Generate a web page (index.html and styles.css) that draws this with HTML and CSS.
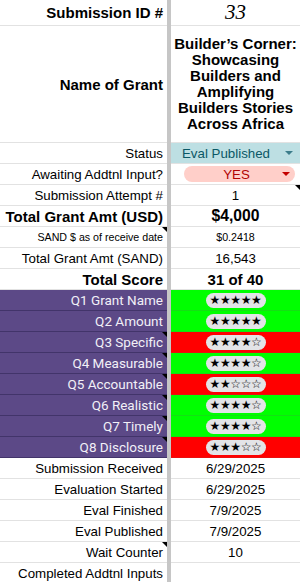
FILE: index.html
```html
<!DOCTYPE html>
<html>
<head>
<meta charset="utf-8">
<link rel="stylesheet" href="styles.css">
</head>
<body>
<div class="sheet">
  <div class="cell label heavy">Submission ID #</div>
  <div class="cell value id">33</div>

  <div class="cell label heavy">Name of Grant</div>
  <div class="cell value grant">Builder’s Corner:<br>Showcasing<br>Builders and<br>Amplifying<br>Builders Stories<br>Across Africa</div>

  <div class="cell label">Status</div>
  <div class="cell value status"><span class="status-text">Eval Published</span><span class="caret teal"></span></div>

  <div class="cell label">Awaiting Addtnl Input?</div>
  <div class="cell value"><span class="yes-pill"><span class="yes-text">YES</span><span class="caret red"></span></span></div>

  <div class="cell label">Submission Attempt #</div>
  <div class="cell value note">1</div>

  <div class="cell label heavy">Total Grant Amt (USD)</div>
  <div class="cell value heavy usd">$4,000</div>

  <div class="cell label small note">SAND $ as of receive date</div>
  <div class="cell value small">$0.2418</div>

  <div class="cell label">Total Grant Amt (SAND)</div>
  <div class="cell value">16,543</div>

  <div class="cell label heavy">Total Score</div>
  <div class="cell value heavy">31 of 40</div>

  <div class="cell label q">Q1 Grant Name</div>
  <div class="cell value good"><span class="stars">★★★★★</span></div>

  <div class="cell label q">Q2 Amount</div>
  <div class="cell value good"><span class="stars">★★★★★</span></div>

  <div class="cell label q note">Q3 Specific</div>
  <div class="cell value bad"><span class="stars">★★★★☆</span></div>

  <div class="cell label q note">Q4 Measurable</div>
  <div class="cell value good"><span class="stars">★★★★☆</span></div>

  <div class="cell label q note">Q5 Accountable</div>
  <div class="cell value bad"><span class="stars">★★☆☆☆</span></div>

  <div class="cell label q note">Q6 Realistic</div>
  <div class="cell value good"><span class="stars">★★★★☆</span></div>

  <div class="cell label q note">Q7 Timely</div>
  <div class="cell value good"><span class="stars">★★★★☆</span></div>

  <div class="cell label q note">Q8 Disclosure</div>
  <div class="cell value bad"><span class="stars">★★★☆☆</span></div>

  <div class="cell label">Submission Received</div>
  <div class="cell value">6/29/2025</div>

  <div class="cell label">Evaluation Started</div>
  <div class="cell value">6/29/2025</div>

  <div class="cell label">Eval Finished</div>
  <div class="cell value">7/9/2025</div>

  <div class="cell label">Eval Published</div>
  <div class="cell value">7/9/2025</div>

  <div class="cell label note">Wait Counter</div>
  <div class="cell value">10</div>

  <div class="cell label">Completed Addtnl Inputs</div>
  <div class="cell value"></div>
</div>
</body>
</html>
```

FILE: styles.css
```css
html, body {
  margin: 0;
  padding: 0;
  background: #ffffff;
}

body {
  width: 300px;
  height: 582px;
  overflow: hidden;
  font-family: "Liberation Sans", Arial, sans-serif;
  font-size: 13.3px;
  color: #000000;
}

.sheet {
  display: grid;
  grid-template-columns: 167px 129px;
  grid-template-rows: 26px 117px;
  grid-auto-rows: 21px;
  column-gap: 4px;
  background: #c6c6c6;
}

.cell {
  position: relative;
  box-sizing: border-box;
  display: flex;
  align-items: center;
  background: #ffffff;
  border-bottom: 1px solid #e2e2e2;
  white-space: nowrap;
}

.label {
  justify-content: flex-end;
  padding: 0 4px 0 2px;
}

.value {
  justify-content: center;
  padding: 0 3px;
}

.heavy {
  font-weight: bold;
  font-size: 15px;
}

.usd {
  font-size: 15.7px;
}

.small {
  font-size: 10.67px;
}

.id {
  font-family: "Liberation Serif", "Times New Roman", serif;
  font-style: italic;
  font-size: 21px;
}

.grant {
  white-space: normal;
  text-align: center;
  font-weight: bold;
  font-size: 15px;
  line-height: 16px;
}

.status {
  background: #bddfe3;
  color: #0b5866;
  justify-content: flex-start;
  padding-left: 11px;
}

.status-text {
  flex: 1;
}

.caret {
  width: 0;
  height: 0;
  border-left: 4px solid transparent;
  border-right: 4px solid transparent;
  margin-right: 4px;
}

.caret.teal {
  border-top: 4px solid #3c7d8b;
}

.caret.red {
  border-top: 4px solid #c40000;
  margin-right: 5px;
}

.yes-pill {
  display: flex;
  align-items: center;
  width: 111px;
  height: 16px;
  margin-left: 7px;
  background: #ffcfc9;
  border-radius: 8px;
  color: #b10202;
  box-sizing: border-box;
  padding-left: 8px;
}

.yes-text {
  flex: 1;
  text-align: center;
}

.q {
  background: #5c4987;
  color: #f2f0f7;
  border-bottom-color: #42346a;
  font-family: Roboto, "Liberation Sans", sans-serif;
  font-size: 13.5px;
}

.good {
  background: #00ff00;
  border-bottom-color: #14e014;
}

.bad {
  background: #ff0000;
  border-bottom-color: #e81010;
}

.stars {
  display: inline-flex;
  align-items: center;
  justify-content: center;
  width: 60px;
  height: 15px;
  border-radius: 8px;
  background: #e3e4e7;
  font-family: "DejaVu Sans", sans-serif;
  font-size: 12px;
  line-height: 15px;
  letter-spacing: -0.4px;
  color: #000000;
}

.note::after {
  content: "";
  position: absolute;
  top: 0;
  right: 0;
  width: 0;
  height: 0;
  border-top: 5px solid #000000;
  border-left: 5px solid transparent;
}
```
